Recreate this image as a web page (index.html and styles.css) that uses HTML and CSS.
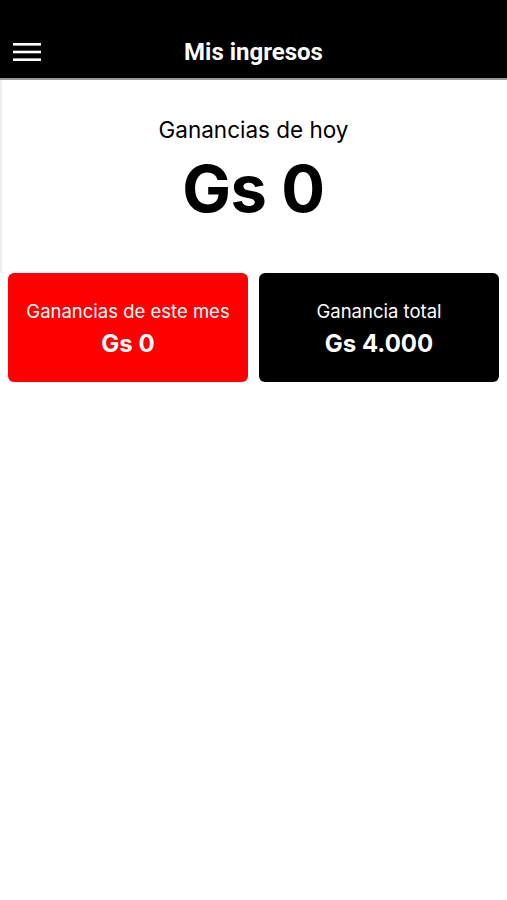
FILE: index.html
```html
<!DOCTYPE html>
<html lang="es">
<head>
    <meta charset="UTF-8">
    <meta name="viewport" content="width=device-width, initial-scale=1.0">
    <title>Mis ingresos</title>
    <link rel="stylesheet" href="styles.css">
</head>
<body>
    <header class="topbar">
        <button class="menu-btn" aria-label="Menu">
            <svg width="28" height="20" viewBox="0 0 28 20">
                <rect x="0" y="1" width="28" height="2.6" fill="#fff"/>
                <rect x="0" y="8.7" width="28" height="2.6" fill="#fff"/>
                <rect x="0" y="16.4" width="28" height="2.6" fill="#fff"/>
            </svg>
        </button>
        <h1 class="topbar-title">Mis ingresos</h1>
    </header>

    <section class="today">
        <p class="today-label">Ganancias de hoy</p>
        <p class="today-amount">Gs 0</p>
    </section>

    <div class="cards">
        <div class="card card-red">
            <p class="card-label">Ganancias de este mes</p>
            <p class="card-amount">Gs 0</p>
        </div>
        <div class="card card-black">
            <p class="card-label">Ganancia total</p>
            <p class="card-amount">Gs 4.000</p>
        </div>
    </div>
</body>
</html>
```

FILE: styles.css
```css
body {
    font-family: Inter, "Noto Sans", sans-serif;
    margin: 0;
    padding: 0;
    background-color: #fff;
    color: #000;
}

p {
    margin: 0;
}

.topbar {
    position: relative;
    height: 80px;
    background-color: #000;
    border-bottom: 2px solid #9a9a9a;
    display: flex;
    align-items: flex-end;
    justify-content: center;
    padding-bottom: 11px;
    box-sizing: border-box;
}

.menu-btn {
    position: absolute;
    left: 13px;
    top: 42px;
    background: none;
    border: none;
    padding: 0;
    cursor: pointer;
    line-height: 0;
}

.topbar-title {
    margin: 0;
    color: #fff;
    font-family: Roboto, sans-serif;
    font-weight: 700;
    font-size: 24px;
    line-height: 30px;
}

.today {
    text-align: center;
    padding-top: 35px;
    height: 193px;
    box-sizing: border-box;
    box-shadow: inset 3px 0 3px -2px rgba(0, 0, 0, 0.12);
}

.today-label {
    font-size: 22.5px;
    line-height: 30px;
}

.today-amount {
    margin-top: 6px;
    font-size: 65px;
    font-weight: 700;
    line-height: 76px;
    letter-spacing: -0.5px;
}

.cards {
    display: grid;
    grid-template-columns: 1fr 1fr;
    gap: 11px;
    padding: 0 8px;
}

.card {
    height: 109px;
    border-radius: 6px;
    color: #fff;
    display: flex;
    flex-direction: column;
    align-items: center;
    justify-content: center;
    gap: 6px;
    padding-top: 2px;
    box-sizing: border-box;
}

.card-red {
    background-color: #ff0000;
}

.card-black {
    background-color: #000;
}

.card-label {
    font-size: 18.5px;
    line-height: 24px;
}

.card-amount {
    font-size: 24px;
    font-weight: 700;
    line-height: 30px;
}
```
